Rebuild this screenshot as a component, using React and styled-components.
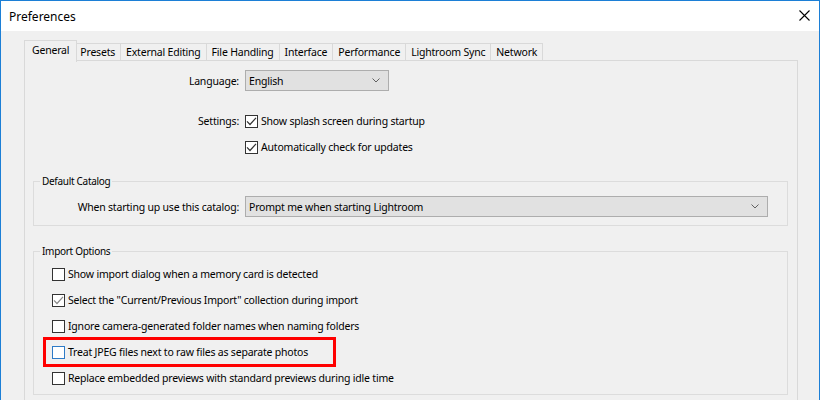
import React from "react";
import styled, { createGlobalStyle } from "styled-components";

const GlobalStyle = createGlobalStyle`
    html, body {
        margin: 0;
        padding: 0;
        background: #f0f0f0;
    }
    body {
        font-family: 'Noto Sans', 'Segoe UI', sans-serif;
        font-size: 10.5px;
        letter-spacing: -0.2px;
        color: #000000;
    }
`;

const Window = styled.div`
    width: 820px;
    height: 400px;
    box-sizing: border-box;
    border: 1px solid #1c7fd6;
    border-bottom: none;
    background: #f0f0f0;
    overflow: hidden;
    display: flex;
    flex-direction: column;
`;

const TitleBar = styled.div`
    height: 30px;
    flex: none;
    background: #ffffff;
    display: flex;
    align-items: center;
    justify-content: space-between;
    padding: 0 9px 0 8px;
    font-size: 12px;
    letter-spacing: 0;
`;

const Title = styled.span`
    position: relative;
    top: 0;
`;

const CloseIcon = styled.svg`
    width: 11px;
    height: 11px;
    margin-top: -2px;
`;

const Body = styled.div`
    flex: 1;
    padding: 9px 21px 0 23px;
`;

const TabStrip = styled.div`
    display: flex;
    align-items: flex-end;
    height: 21px;
    padding-left: 2px;
    position: relative;
    z-index: 2;
`;

const Tab = styled.div`
    box-sizing: border-box;
    height: ${p => (p.$active ? "22px" : "18px")};
    margin: ${p => (p.$active ? "0 -2px -1px -2px" : "0 0 0 -1px")};
    padding: ${p => (p.$active ? "2px 7px 0" : "0 5px")};
    border: 1px solid #d9d9d9;
    border-bottom: ${p => (p.$active ? "none" : "1px solid #d9d9d9")};
    background: #f0f0f0;
    display: flex;
    align-items: ${p => (p.$active ? "flex-start" : "center")};
    white-space: nowrap;
    z-index: ${p => (p.$active ? 2 : 1)};
    &:first-child {
        margin-left: -2px;
    }
`;

const Panel = styled.div`
    border: 1px solid #d9d9d9;
    margin-top: -1px;
    height: 360px;
    box-sizing: border-box;
    padding-top: 9px;
`;

const FormGrid = styled.div`
    display: grid;
    grid-template-columns: ${p => p.$label}px 1fr;
    column-gap: 6px;
    align-items: center;
`;

const Label = styled.div`
    text-align: right;
    white-space: nowrap;
    align-self: ${p => (p.$top ? "start" : "center")};
    line-height: 20px;
`;

const Controls = styled.div`
    display: flex;
    flex-direction: column;
    gap: 6px;
`;

const Select = styled.div`
    box-sizing: border-box;
    height: 21px;
    width: ${p => p.$width || "auto"};
    border: 1px solid #adadad;
    background: #e1e1e1;
    display: flex;
    align-items: center;
    justify-content: space-between;
    padding: 0 8px 0 3px;
`;

const Chevron = () => (
    <svg width="8" height="5" viewBox="0 0 8 5">
        <polyline points="0.5,0.5 4,4 7.5,0.5" fill="none" stroke="#606060" strokeWidth="1" />
    </svg>
);

const CheckRow = styled.label`
    position: relative;
    display: flex;
    align-items: center;
    gap: 3px;
    height: ${p => p.$h || 20}px;
    white-space: nowrap;
`;

const Box = styled.span`
    box-sizing: border-box;
    width: 13px;
    height: 13px;
    flex: none;
    border: 1px solid ${p => (p.$hover ? "#2e7bc7" : "#333333")};
    background: #ffffff;
    display: flex;
    align-items: center;
    justify-content: center;
`;

const CheckMark = ({ color = "#333333" }) => (
    <svg width="11" height="11" viewBox="0 0 11 11">
        <polyline points="1,5.3 4,8.5 10,1.8" fill="none" stroke={color} strokeWidth="1.2" />
    </svg>
);

const Checkbox = ({ checked, hover, markColor, children, h }) => (
    <CheckRow $h={h}>
        <Box $hover={hover}>{checked && <CheckMark color={markColor} />}</Box>
        {children}
    </CheckRow>
);

const Group = styled.fieldset`
    margin: ${p => p.$mt}px 9px 0 8px;
    padding: ${p => p.$pad};
    border: 1px solid #dcdcdc;
    min-width: 0;
`;

const Legend = styled.legend`
    margin-left: 6px;
    padding: 0 2px;
    font-size: 10px;
    letter-spacing: -0.3px;
    line-height: 12px;
`;

const SettingsSpacer = styled.div`
    height: 20px;
`;

const ImportList = styled.div`
    display: flex;
    flex-direction: column;
    padding-left: 18px;
`;

const Highlight = styled.span`
    position: absolute;
    left: -9px;
    top: -2px;
    width: 293px;
    height: 30px;
    box-sizing: border-box;
    border: 3px solid #ff0000;
    pointer-events: none;
`;

const tabs = ["General", "Presets", "External Editing", "File Handling", "Interface", "Performance", "Lightroom Sync", "Network"];

const importOptions = [
    { text: "Show import dialog when a memory card is detected" },
    { text: 'Select the "Current/Previous Import" collection during import', checked: true, markColor: "#8a8a8a" },
    { text: "Ignore camera-generated folder names when naming folders" },
    { text: "Treat JPEG files next to raw files as separate photos", hover: true, highlight: true },
    { text: "Replace embedded previews with standard previews during idle time" },
];

const App = () => {
    return (
        <Window>
            <GlobalStyle />
            <TitleBar>
                <Title>Preferences</Title>
                <CloseIcon viewBox="0 0 11 11">
                    <path d="M0.5 0.5 L10.5 10.5 M10.5 0.5 L0.5 10.5" stroke="#000" strokeWidth="1.1" />
                </CloseIcon>
            </TitleBar>
            <Body>
                <TabStrip>
                    {tabs.map((t, i) => (
                        <Tab key={t} $active={i === 0}>{t}</Tab>
                    ))}
                </TabStrip>
                <Panel>
                    <FormGrid $label={214}>
                        <Label>Language:</Label>
                        <Select $width="144px">
                            <span>English</span>
                            <Chevron />
                        </Select>
                    </FormGrid>
                    <SettingsSpacer />
                    <FormGrid $label={214}>
                        <Label $top>Settings:</Label>
                        <Controls>
                            <Checkbox checked>Show splash screen during startup</Checkbox>
                            <Checkbox checked>Automatically check for updates</Checkbox>
                        </Controls>
                    </FormGrid>

                    <Group $mt={18} $pad="9px 19px 8px 0">
                        <Legend>Default Catalog</Legend>
                        <FormGrid $label={205}>
                            <Label>When starting up use this catalog:</Label>
                            <Select>
                                <span>Prompt me when starting Lightroom</span>
                                <Chevron />
                            </Select>
                        </FormGrid>
                    </Group>

                    <Group $mt={19} $pad="4px 0 3px 0">
                        <Legend>Import Options</Legend>
                        <ImportList>
                            {importOptions.map(o => (
                                <Checkbox key={o.text} h={26} checked={o.checked} hover={o.hover} markColor={o.markColor}>
                                    {o.highlight && <Highlight />}
                                    {o.text}
                                </Checkbox>
                            ))}
                        </ImportList>
                    </Group>
                </Panel>
            </Body>
        </Window>
    );
};

export default App;
